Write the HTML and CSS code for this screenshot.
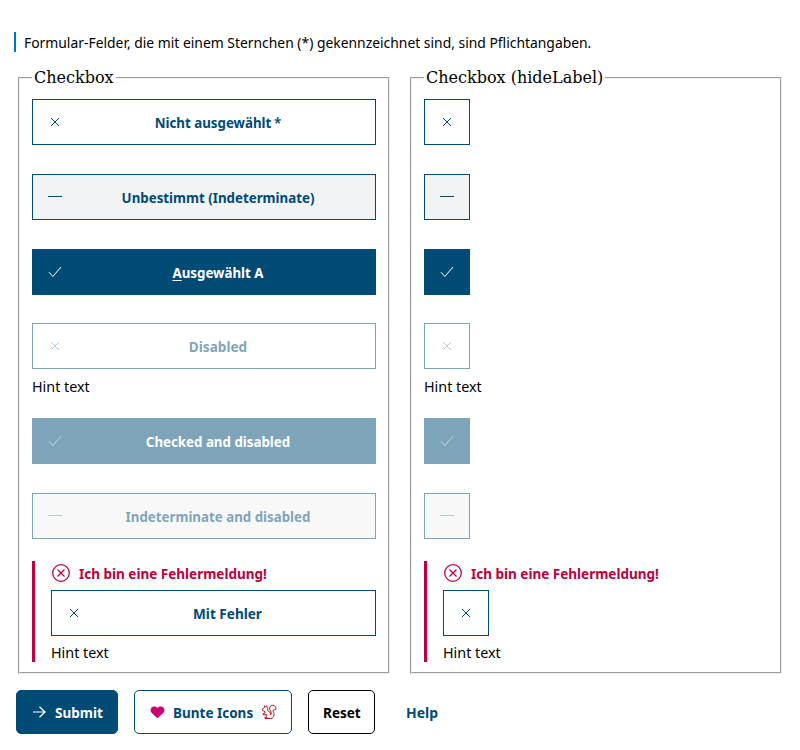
FILE: index.html
```html
<!DOCTYPE html>
<html lang="de">
<head>
<meta charset="utf-8">
<title>Checkbox</title>
<link rel="stylesheet" href="styles.css">
</head>
<body>
<svg class="sprite" aria-hidden="true">
  <symbol id="cross" viewBox="0 0 16 16"><path d="M4 4l8 8M12 4l-8 8"/></symbol>
  <symbol id="minus" viewBox="0 0 16 16"><path d="M1 7.5h14"/></symbol>
  <symbol id="check" viewBox="0 0 16 16"><path d="M2 8.2l3.8 4.3L14 3"/></symbol>
  <symbol id="error" viewBox="0 0 18 18"><circle cx="9" cy="9" r="8.3"/><path d="M5.5 5.5l7 7M12.500 5.500l-7 7"/></symbol>
</svg>
<form>
  <p class="notice"><span class="text regular">Formular-Felder, die mit einem Sternchen (*) gekennzeichnet sind, sind Pflichtangaben.</span></p>
  <div class="columns">
    <fieldset>
      <legend>Checkbox</legend>
      <div class="field"><div class="box"><svg class="icon"><use href="#cross"/></svg><span class="label">Nicht ausgewählt<span class="star">*</span></span></div></div>
      <div class="field"><div class="box mixed"><svg class="icon"><use href="#minus"/></svg><span class="label">Unbestimmt (Indeterminate)</span></div></div>
      <div class="field short"><div class="box checked"><svg class="icon"><use href="#check"/></svg><span class="label"><u>A</u>usgewählt A</span></div></div>
      <div class="field hinted"><div class="box disabled"><svg class="icon"><use href="#cross"/></svg><span class="label wide">Disabled</span></div><div class="hint"><span class="text small">Hint text</span></div></div>
      <div class="field"><div class="box checked disabled"><svg class="icon"><use href="#check"/></svg><span class="label">Checked and disabled</span></div></div>
      <div class="field last"><div class="box mixed disabled"><svg class="icon"><use href="#minus"/></svg><span class="label">Indeterminate and disabled</span></div></div>
      <div class="failed"><div class="message"><svg class="error-icon"><use href="#error"/></svg><span class="text">Ich bin eine Fehlermeldung!</span></div><div class="box"><svg class="icon"><use href="#cross"/></svg><span class="label wide">Mit Fehler</span></div><div class="hint"><span class="text small">Hint text</span></div></div>
    </fieldset>
    <fieldset class="compact">
      <legend>Checkbox (hideLabel)</legend>
      <div class="field"><div class="box"><svg class="icon"><use href="#cross"/></svg></div></div>
      <div class="field"><div class="box mixed"><svg class="icon"><use href="#minus"/></svg></div></div>
      <div class="field short"><div class="box checked"><svg class="icon"><use href="#check"/></svg></div></div>
      <div class="field hinted"><div class="box disabled"><svg class="icon"><use href="#cross"/></svg></div><div class="hint"><span class="text small">Hint text</span></div></div>
      <div class="field"><div class="box checked disabled"><svg class="icon"><use href="#check"/></svg></div></div>
      <div class="field last"><div class="box mixed disabled"><svg class="icon"><use href="#minus"/></svg></div></div>
      <div class="failed"><div class="message"><svg class="error-icon"><use href="#error"/></svg><span class="text">Ich bin eine Fehlermeldung!</span></div><div class="box"><svg class="icon"><use href="#cross"/></svg></div><div class="hint"><span class="text small">Hint text</span></div></div>
    </fieldset>
  </div>
  <div class="actions">
    <div class="button primary"><svg class="arrow" viewBox="0 0 14 12"><path d="M1 6h12M7.500 .8L13 6l-5.500 5.200"/></svg><span class="text">Submit</span></div>
    <div class="button secondary"><svg class="heart" viewBox="0 0 16 14"><path d="M8 13.300L1.800 7.500C-2 3.500 3.500-2.200 8 2.200c4.500-4.400 10 1.300 6.200 5.300z"/></svg><span class="text caption">Bunte Icons</span><svg class="squirrel" viewBox="0 0 16 16"><path d="M3.500 3.500L3.300 1.800 4.600 2.700 5.800 1.800 6 3.200C7 4 7 5.500 6.300 6.500L8 7.500C9.500 8.500 10 9.500 9.500 11C11 9 9.800 7 8.800 5.500 8 3.500 9.500 1.500 11.500 1.300 14 1.200 15.500 3.500 14.800 5.500 14 6.500 12.800 5.500 12 6.300 11.800 7.500 13.500 9 13 11 12.600 13 11.500 14.500 10 14.500H4L3.800 13.300H6.300C5 12.500 5 11.500 5.500 10.500L2.500 11 2 9.800 4 9 4 7.500 1.500 6.500 1.300 5z"/></svg></div>
    <div class="button reset"><span class="text middle">Reset</span></div>
    <div class="button link"><span class="text wider">Help</span></div>
  </div>
</form>
</body>
</html>
```
FILE: styles.css
```css
* { box-sizing: border-box; }
body { margin: 0; background: #fff; color: #000; font: 15px/20px "Noto Sans", sans-serif; }
form { padding: 32px 14px 0; }
.sprite { display: none; }
svg { fill: none; stroke: currentColor; stroke-width: 1; flex: none; }
.text { display: inline-block; transform: scaleX(.9); transform-origin: left; }
.text.regular { transform: scaleX(.925); }
.text.small { transform: scaleX(.955); }
.text.wider { transform: scaleX(.93); }
.text.middle { transform-origin: center; }
.text.caption { width: 81px; }
.notice { margin: 0; height: 20px; border-left: 2px solid #0077b6; padding-left: 8px; line-height: 21px; white-space: nowrap; }
.columns { display: grid; grid-template-columns: 372px 372px; gap: 20px; margin: 16px 0 0 4px; }
fieldset { min-width: 0; margin: 0; height: 606px; padding: 12px 12px 0; border: 2px groove #f0f0f0; }
legend { padding: 0 2px; font: 16px/19px "DejaVu Serif", serif; }
.field { margin-bottom: 29px; }
.field.short { margin-bottom: 28px; }
.field.hinted { margin-bottom: 22px; }
.field.last { margin-bottom: 22px; }
.box { display: flex; align-items: center; height: 46px; padding: 0 14px; border: 1px solid #004b76; color: #004b76; }
.compact .box { width: 46px; }
.icon { width: 16px; height: 16px; }
.label { flex: 1; margin-left: 12px; text-align: center; font-weight: 700; white-space: nowrap; transform: scaleX(.887); }
.label.wide { transform: scaleX(.905); }
.star { margin-left: 3px; font-weight: 600; }
.mixed { background: #f2f3f5; }
.checked { background: #004b76; color: #fff; }
.checked u { text-underline-offset: 2px; }
.disabled { opacity: .5; }
.disabled .icon { opacity: .55; }
.hint { height: 20px; line-height: 21px; margin-top: 7px; }
.failed { height: 101px; padding-left: 16px; border-left: 3px solid #c0003c; }
.failed .hint { margin-top: 6px; }
.message { display: flex; align-items: center; gap: 9px; height: 29px; padding: 0 0 6px 1px; color: #c0003c; font-weight: 700; white-space: nowrap; }
.error-icon { width: 18px; height: 18px; stroke-width: 1.300; }
.actions { display: flex; gap: 16px; margin: 16px 0 0 2px; }
.button { display: flex; align-items: center; height: 44px; border: 1px solid #004b76; border-radius: 5px; color: #004b76; font-weight: 700; white-space: nowrap; }
.primary { width: 102px; padding-left: 15px; gap: 9px; background: #004b76; color: #fff; }
.secondary { width: 158px; padding-left: 15px; gap: 8px; }
.secondary .squirrel { margin-left: -1px; }
.reset { width: 67px; justify-content: center; border-color: #000; color: #000; }
.link { border-color: transparent; padding-left: 14px; }
.arrow { width: 14px; height: 12px; stroke-width: 1.200; }
.heart { width: 15px; height: 13px; fill: #cd0072; stroke: none; }
.squirrel { width: 16px; height: 16px; stroke: #b51c1c; }
```
